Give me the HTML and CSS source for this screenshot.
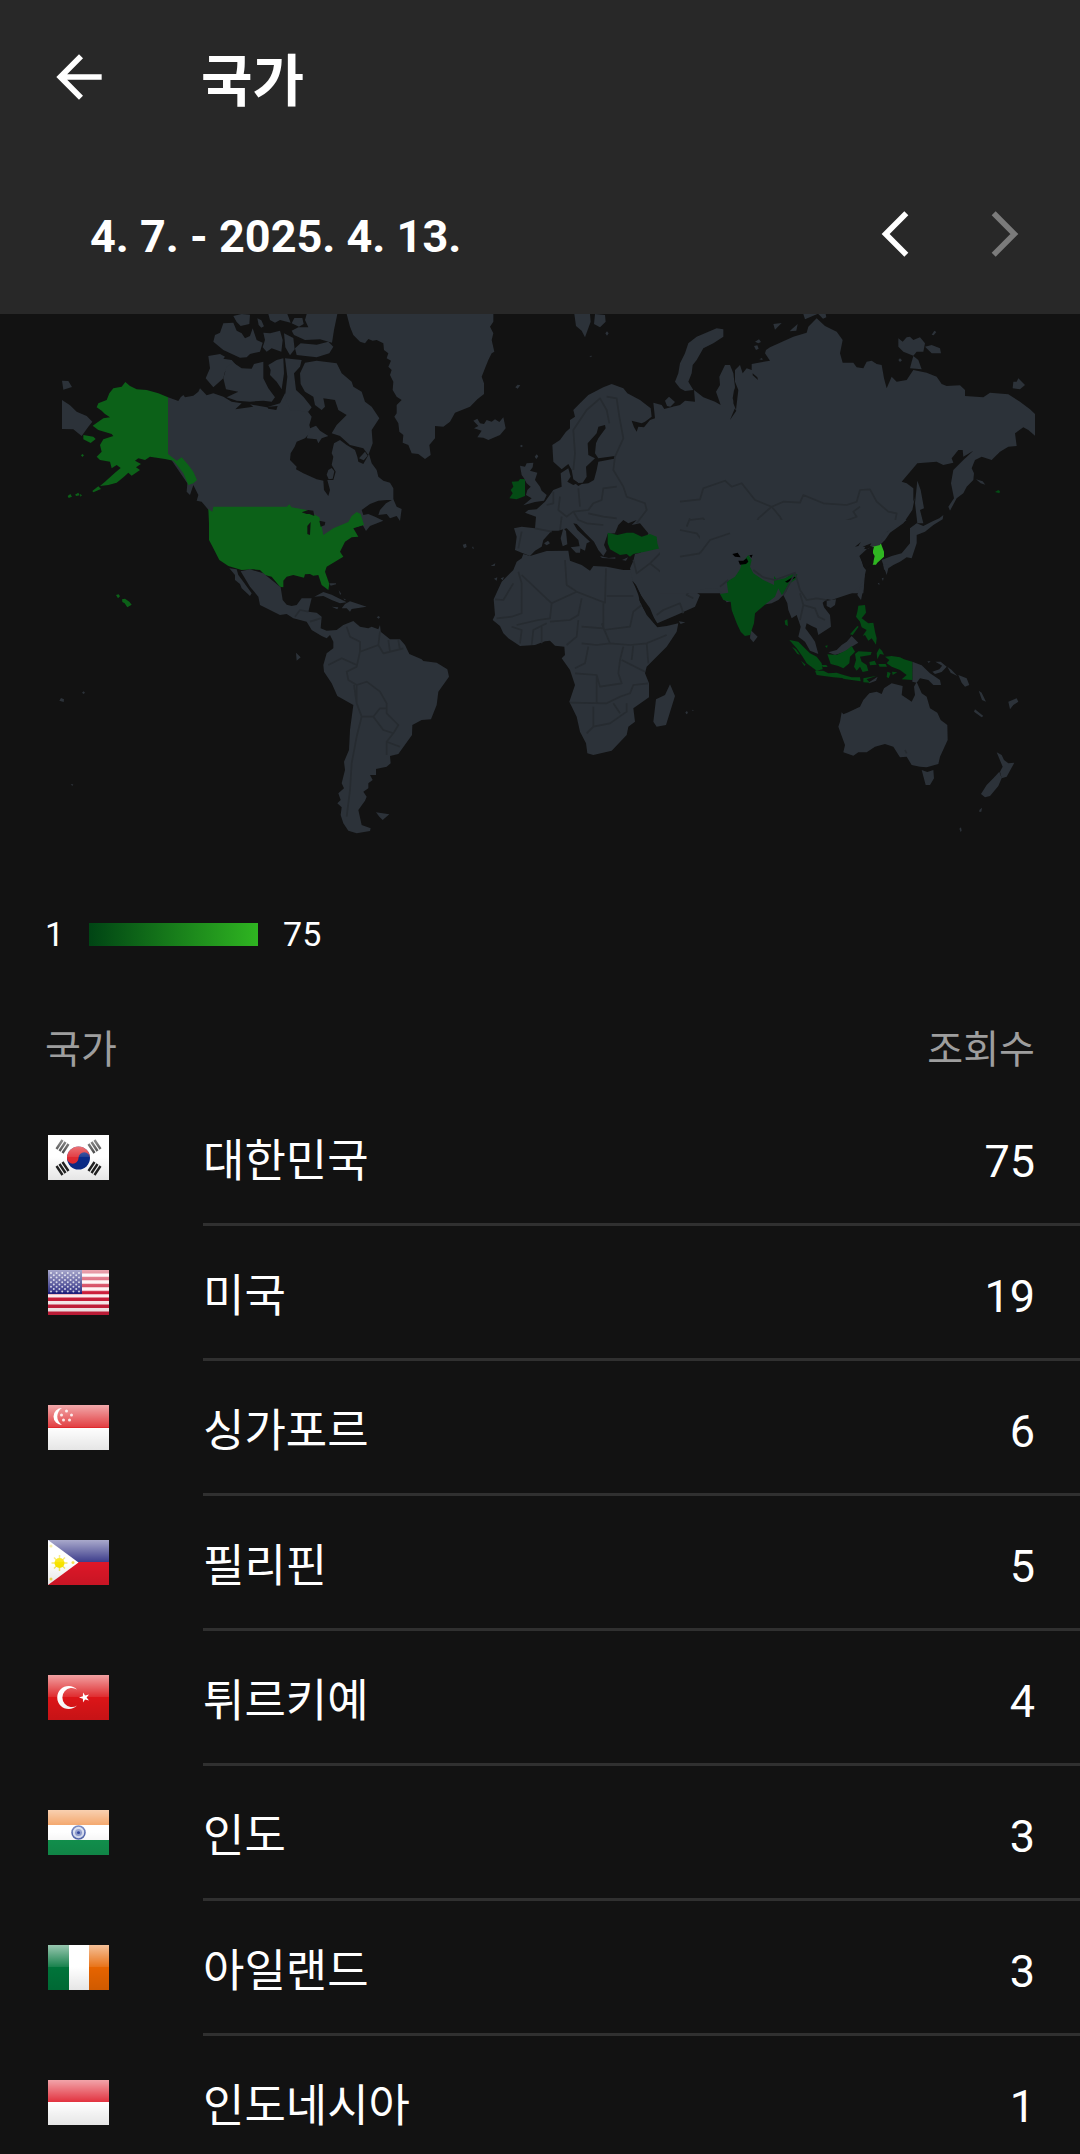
FILE: index.html
```html
<!DOCTYPE html>
<html lang="ko">
<head>
  <meta charset="UTF-8" />
  <meta name="viewport" content="width=device-width, initial-scale=1" />
  <title>국가</title>
  <link rel="stylesheet" href="styles.css">
</head>
<body>
  <div class="app">
    <header class="header">
      <div class="toolbar">
        <button class="icon-btn" type="button" aria-label="뒤로">
          <svg viewBox="0 0 24 24"><path d="M20 11H7.83l5.59-5.59L12 4l-8 8 8 8 1.41-1.41L7.83 13H20v-2z" fill="currentColor"/></svg>
        </button>
        <h1>국가</h1>
      </div>
      <div class="period">
        <p class="period-label">4. 7. - 2025. 4. 13.</p>
        <button class="icon-btn" type="button" aria-label="이전">
          <svg viewBox="0 0 24 24"><path d="M16 4.7L8.7 12l7.3 7.3" class="chevron"/></svg>
        </button>
        <button class="icon-btn" type="button" aria-label="다음" disabled>
          <svg viewBox="0 0 24 24"><path d="M8 4.7l7.3 7.3L8 19.3" class="chevron"/></svg>
        </button>
      </div>
    </header>

    <main class="content">
      <svg class="map" viewBox="0 942 3240 1620" role="img" aria-label="세계 지도">
        <!-- North America -->
        <g transform="translate(150 930)">
          <path class="land" d="M354 262L385 273 392 262 400 255 405 262 430 257 445 245 450 235 470 256 490 250 520 260 545 275 575 280 556 298 610 290 600 283 650 292 690 280 705 250 720 262 726 300 748 268 770 300 785 320 778 345 783 365 765 385 740 395 734 410 722 430 720 450 740 470 738 478 760 490 800 508 820 512 822 540 835 558 840 540 832 510 850 510 857 485 845 465 850 440 845 430 852 400 870 390 890 405 915 420 922 440 925 455 940 462 957 432 965 460 980 480 985 500 1000 512 1020 518 1030 535 1030 570 1010 570 985 572 960 582 935 600 940 615 955 612 975 620 1000 632 960 648 948 663 938 645 820 680 480 605 455 575 440 572 445 555 430 525 420 555 410 545 412 520 354 435Z"/>
          <path class="land" d="M985 615L990 600 1008 580 1030 568 1040 590 1055 597 1050 633 1040 618 1020 625 1010 612Z"/>
          <path class="land" d="M36 212L55 213 66 231 40 239ZM36 270L60 286 80 305 110 318 127 335 115 350 95 378 70 358 36 357Z"/>
          <path class="land" d="M475 138L510 132 525 140 520 146 545 150 558 165 525 185 520 205 490 232 467 205 480 175Z"/>
          <path class="land" d="M520 205L530 170 550 158 575 175 605 176 612 162 640 155 640 205 655 235 675 262 665 275 640 272 600 275 560 272 530 262 565 245 528 238Z"/>
          <path class="land" d="M655 165L680 150 700 145 702 190 695 238 680 215 660 195 662 180ZM705 145L755 150 750 170 732 190 738 240 760 260 785 292 775 305 720 300 705 260 712 200Z"/>
          <path class="land" d="M765 158L800 152 860 160 875 190 905 215 910 230 935 245 945 275 965 290 988 325 965 360 968 400 955 435 940 415 900 405 870 378 845 370 860 345 890 315 865 300 855 270 820 265 825 290 815 300 795 285 790 260 765 245 752 222 750 190Z"/>
          <path class="land" d="M780 355L798 347 810 362 835 378 815 385 805 400 800 388 770 385ZM835 480l10-6 8 10-5 22-12 2-6-14zM945 425l8 12-12 14-14-6z"/>
          <path class="land" d="M570 143L520 120 490 95 495 75 510 68 520 40 550 38 560 62 575 70 585 85 600 78 608 55 620 90 638 98 630 125 600 132 590 142Z"/>
          <path class="land" d="M550 18L575 12 600 14 598 42 572 48 560 36ZM622 25l12 6 8 18-8 4-8-8zM640 68L660 70 690 62 698 90 694 125 665 115 650 125 638 112 645 90ZM655 12L712 12 722 38 690 30 675 38 660 30ZM702 70l28 14 4 34-14 18-14-24zM735 115L752 100 800 104 835 95 850 110 838 130 800 142 740 135ZM770 12L862 12 852 60 846 98 810 88 765 90 732 75 725 62 745 52 775 52 765 30ZM725 40l8-16 24 0 4 18-14 8z"/>
          <path class="mid" d="M354 262L325 250 290 240 260 238 240 228 226 216 215 230 190 235 178 250 170 270 145 280 140 292 155 302 165 312 180 322 160 325 128 347 145 360 185 372 190 378 160 388 150 405 155 425 140 440 150 450 180 455 185 475 200 465 212 474 195 488 165 515 150 528 175 525 200 518 222 500 235 488 245 497 270 480 258 472 273 462 255 452 265 445 285 450 300 440 345 447 370 452 385 470 400 490 415 525 430 520 441 510 430 485 415 465 395 442 380 452 354 432Z"/>
          <path class="mid" d="M100 375L130 380 137 387 122 399 100 388ZM127 543l18-14 8 8-23 10zM53 558l8-6 5 8-10 4zM75 554l10-6 4 8-10 2zM90 552l6 4-5 4zM93 436l4-4 5 4-5 5zM198 855l8-2 4 6-6 6zM216 868L225 866 238 875 245 884 232 892 224 880 217 876Z"/>
          <path class="mid" d="M475 597L487 605 490 590 710 590 718 583 725 592 770 600 790 612 808 622 815 650 820 675 850 655 895 636 905 618 920 606 932 612 942 645 910 655 925 680 905 682 885 695 870 725 880 740 860 752 830 770 825 785 838 822 835 840 815 825 805 795 790 797 780 792 765 793 762 803 730 795 710 800 700 812 700 832 690 830 665 800 645 795 630 780 610 778 575 780 535 768 508 750 485 705 477 690 477 640Z"/>
          <path class="sea" d="M755 607L775 600 790 602 793 618 778 612 770 612ZM772 648L782 636 780 675 772 672ZM808 632l18 4-2 10-12 4zM645 282l10 8 28-2-4 12-24-4z"/>
        </g>

        <!-- Greenland, Europe -->
        <g transform="translate(1020 930)">
          <path class="land" d="M20 12L30 50 40 75 60 95 75 100 85 87 98 92 110 90 130 100 132 120 145 130 140 145 153 152 145 170 155 180 150 195 160 215 158 240 170 260 185 270 170 285 170 310 163 320 175 340 178 365 190 375 188 398 205 405 215 430 235 432 255 447 272 435 268 405 285 385 285 348 310 350 330 335 345 308 390 290 412 268 432 252 432 220 425 200 435 175 445 150 455 130 463 125 455 90 460 70 450 50 460 35 460 12Z"/>
          <path class="land" d="M400 332L412 326 420 340 432 342 440 330 455 335 465 328 478 336 490 322 497 355 480 375 445 390 430 383 412 382 425 362 402 355 415 348Z"/>
          <path class="land" d="M703 12L750 12 752 35 735 82 725 62 708 48ZM765 12L795 15 797 35 780 52 762 42ZM526 232l7-8 8 2-8 10zM796 70l5-6 5 6-5 7zM748 138l8-1-3 5zM540 408l4-4 5 4-5 4zM584 440l6-7 5 6-6 8zM368 704l10-3 2 10-8 4zM396 714l3-5 3 8zM452 768l14-8-2 8z"/>
          <path class="land" d="M637 405L660 390 678 365 690 355 690 330 705 320 700 300 720 280 745 255 790 232 815 222 850 235 862 250 900 270 932 295 935 320 915 335 905 340 875 332 882 352 890 365 895 350 912 352 930 330 945 325 940 278 965 285 975 300 962 318 1000 290 1015 290 1060 280 1120 290 1200 400 1200 700 1080 830 870 810 885 740 900 735 925 670 900 640 875 645 890 630 865 640 850 630 835 645 825 670 803 672 792 705 800 722 790 738 775 720 762 695 735 668 710 642 700 640 712 660 750 695 740 700 735 722 720 715 715 690 695 670 680 655 655 662 635 662 610 690 605 710 585 722 570 738 545 728 525 720 530 680 522 655 545 650 585 655 588 620 555 608 565 600 590 598 615 575 640 540 665 530 662 490 685 475 692 500 682 515 700 525 715 518 700 508 695 480 685 462 665 478 640 455Z"/>
          <path class="sea" d="M705 520L728 518 740 500 738 470 765 445 745 435 743 400 770 370 775 350 795 345 797 355 775 385 768 400 765 430 775 445 825 438 822 446 775 455 770 480 762 510 745 520 725 522 715 528Z"/>
          <path class="land" d="M975 272l12-12 18 16-14 14-10-2zM692 712l30-4-2 20-12 0zM612 700l12-8 6 8-10 6zM662 685l8-30 8 8 4 40-14 6zM780 738l26 6 20-2 0 4-40-2zM846 750l18-8-6 10z"/>
          <path class="land" d="M540 467L555 470 560 460 580 458 578 472 570 482 592 488 585 510 600 530 605 542 620 555 612 572 585 576 550 586 575 565 558 555 562 540 572 530 560 520 552 505 545 495Z"/>
          <path class="low" d="M555 508L540 507 535 514 515 515 520 530 512 540 518 550 508 565 530 568 555 558Z"/>
          <path class="low" d="M803 668L820 672 832 675 860 668 880 668 905 680 930 672 950 680 952 700 960 725 900 728 880 732 870 740 860 732 840 735 810 718 803 700Z"/>
          <path class="sea" d="M980 640L1005 623 1015 630 1000 645 1008 670 1020 690 1025 720 1000 720 995 705 1005 695 990 665Z"/>
          <path class="border" d="M700 480L705 430 700 360 740 300 780 265 800 300 808 340M800 260L830 265 838 320 850 385 825 440M825 440L820 480 850 530 860 560 915 580 920 600 890 640M660 560L655 600 680 620 700 605 745 600 760 580 785 570 790 535 830 530M715 535L720 590M700 605L715 630 740 640 790 645M745 610L790 620 830 625M660 660L665 620M545 665L535 715M585 655L635 665M975 600L1000 570 1060 565M975 600L985 635M640 545L640 580 620 585"/>
        </g>

        <!-- Africa, Middle East -->
        <g transform="translate(1350 1620)">
          <path class="land" d="M190 90L200 65 215 55 220 42 240 48 290 33 355 32 360 62 395 75 420 92 430 78 470 80 520 90 545 90 550 125 565 165 570 185 590 225 622 262 650 258 685 250 680 275 650 320 590 380 585 400 597 430 597 472 550 505 555 545 535 560 530 585 485 632 430 645 412 640 408 610 390 575 380 530 358 485 375 435 360 390 335 355 345 345 343 320 315 317 300 302 285 304 255 315 210 318 175 295 160 280 150 258 128 240 135 225 131 178 155 125Z"/>
          <path class="land" d="M550 62L555 42 650 20 700 -30 1060 -30 1060 140 830 187 800 147 760 150 720 145 750 165 735 200 680 225 622 250 600 215 580 180 560 140 548 122 540 85Z"/>
          <path class="sea" d="M660 102L680 122 700 132 708 145 685 147 680 135 660 115ZM546 122L558 135 572 165 600 205 622 258 612 248 580 205 568 180 570 165Z"/>
          <path class="land" d="M660 433L675 468 648 555 620 560 610 545 618 478 645 465ZM686 244l20 3-14 5zM132 116l10-4-2 10zM152 115l10-4-4 10zM706 517l5-4 3 6-5 4zM725 511l4-2 2 4z"/>
          <path class="border" d="M205 95L215 130 215 220 185 230 140 235M215 105L305 190 380 155 350 135 345 60M190 130L160 180 135 178M380 155L465 188 468 85M470 168L550 168M305 190L300 235 265 240 200 255M300 245L360 240 385 225 395 175M385 240L380 290 350 315M395 260L460 265 460 190M455 250L480 310 540 315 590 310 650 285M460 270L540 260 550 215 575 195M395 310L440 315 480 310M520 320L510 360 505 400 515 430 450 440 440 405 375 400M415 320L405 370 375 385M360 488L470 490 510 470 540 460 550 435 595 430M440 405L440 490M430 500L430 560 410 580M430 560L480 550 530 515 530 490M515 360L585 395M590 310L595 370M550 315L545 360M245 315L250 270 290 250M275 310L275 260M210 310L215 270 185 260M490 490L510 520M550 60L560 100 600 70 650 110M600 70L635 35M655 40L640 80 660 105M700 220L690 190 640 210 620 225M760 150L750 60 720 30M760 90L820 95 870 40M720 150L710 165 730 175"/>
        </g>

        <!-- Northern Asia, Japan -->
        <g transform="translate(2040 930)">
          <path class="land" d="M110 55L130 58 130 80 100 100 70 115 50 150 38 165 35 190 25 215 40 240 15 243 0 235 -15 215 -5 190 0 160 15 130 25 100 50 80Z"/>
          <path class="land" d="M-60 300L0 285 15 272 45 275 42 240 70 262 105 275 122 285 108 245 120 225 118 200 135 165 150 165 160 190 165 230 160 280 168 300 175 240 165 215 165 180 180 165 188 190 200 175 215 180 215 162 270 152 255 130 258 120 270 112 300 98 340 80 380 68 385 50 410 25 435 48 470 65 488 90 480 130 488 158 520 158 530 172 550 175 560 155 575 152 590 162 605 165 612 205 620 235 635 200 650 215 680 210 690 195 700 180 740 188 770 200 785 222 800 228 840 226 855 240 855 258 910 262 930 248 985 253 1020 275 1050 298 1065 312 1065 377 1045 360 1030 352 1005 370 1010 408 985 410 960 425 935 450 905 440 885 450 875 475 882 490 880 510 860 530 850 550 830 565 810 602 805 590 822 565 813 520 820 480 850 450 880 422 850 440 848 420 835 420 815 445 820 458 790 465 770 455 712 460 665 515 680 520 700 535 700 575 705 560 697 600 670 640 630 668 615 690 600 705 580 712 570 700 545 715 555 695 525 710 560 718 572 712 540 740 545 770 555 790 550 850 -60 850Z"/>
          <path class="land" d="M712 512L722 540 732 595 720 600 730 640 712 640 705 580ZM690 655L710 640 730 648 755 635 778 625 790 615 788 628 760 645 735 665 710 675 710 700 695 745 680 742 660 755 640 765 625 775 620 795 605 750 635 738 665 730 690 700Z"/>
          <path class="land" d="M655 85L668 95 680 82 690 80 700 90 720 82 735 100 730 125 710 125 700 137 670 125 655 110ZM735 110L755 105 780 115 783 130 755 130ZM700 138L715 150 725 178 690 175 695 155ZM335 58l18-16-4 20-20 2zM280 42l25-3-20 20zM370 12L412 12 375 28ZM415 12l22 0 2 10-10 4zM755 74l8-12 6 4-8 10zM655 150l5-5 6 6-6 5zM1000 215L1010 215 1015 205 1035 225 1020 238 998 235ZM888 508l20 6 8 10-14-4zM225 95l12-7 6 8-8 4zM222 108l10-2 4 10-8 4zM238 148l8-4 2 6z"/>
          <path class="sea" d="M158 265l5-30 5 20-2 35zM150 330l14-34 5 6zM218 190l14 12 2 8-16-14z"/>
          <path class="top" d="M578 708L603 701 612 725 612 740 592 758 588 764 578 764 584 738 579 730Z"/>
          <path class="low" d="M945 546l10-6 5 4-2 6z"/>
          <path class="border" d="M0 575L60 568 70 535 135 512 155 530 185 520 225 570 275 590 310 575 360 578 370 555 430 580 500 585 530 575 540 540 570 538 590 575 625 605 650 610 645 635 620 665M275 590L300 620 310 640 350 662 420 678 470 660 490 635 530 620 520 605 540 590M275 590L235 625 215 670 155 685 135 700M30 630L70 625 90 660 130 690 180 690M0 660L50 670 80 710 130 720M0 740L60 730 80 700M20 650L30 625"/>
        </g>

        <!-- South and East Asia, Oceania -->
        <g transform="translate(2100 1560)">
          <path class="land" d="M0 0L620 0 600 15 560 35 545 55 540 75 518 80 500 75 480 105 490 140 498 150 490 185 455 220 410 235 395 240 380 238 368 248 372 262 390 285 393 320 355 345 350 325 335 318 320 310 316 325 335 350 345 365 355 402 330 392 315 365 295 350 302 320 290 285 275 295 265 270 262 250 250 225 235 240 215 250 160 260 100 240 60 215 50 205 0 208Z"/>
          <path class="sea" d="M500 88L478 108 496 148 520 130 517 100 522 80ZM465 80l18-14-8 12zM488 80l26-10-6 12z"/>
          <path class="land" d="M152 330L173 350 160 367 150 355ZM380 242L408 238 405 255 392 264 380 258ZM480 202L492 198 483 240 472 225ZM550 135L565 132 560 155 552 148ZM545 175l6-2-2 10zM533 190l5-2 0 8z"/>
          <path class="land" d="M385 397L410 390 425 375 440 365 455 348 475 368 455 380 435 395 405 405ZM505 488L533 470 528 482 508 490Z"/>
          <path class="land" d="M637 425L665 436 690 460 720 480 723 495 700 495 685 480 660 475 650 488 637 485ZM697 455L718 448 728 435 740 440 725 456 705 462ZM706 425L722 425 740 440 728 438ZM742 440L755 450 772 468 752 458ZM775 465L800 475 808 495 795 500 785 488ZM836 512L845 518 858 545 846 540ZM825 568L850 588 845 592 822 575ZM925 545L950 535 955 545 940 555 930 568ZM682 424l10 0-6 5z"/>
          <path class="land" d="M425 577L430 583 445 577 480 560 490 540 508 520 530 515 545 522 552 505 575 490 608 498 605 525 635 545 645 525 642 500 650 486 665 520 680 530 690 565 712 578 722 600 742 615 743 660 720 710 715 732 680 742 660 740 635 735 620 710 600 712 580 680 555 672 525 680 500 697 475 697 460 707 430 697 435 675 415 620 420 605ZM665 750L682 756 700 750 702 775 690 795 677 795ZM890 697L905 705 912 720 925 730 943 728 920 770 905 775 900 755 908 740ZM898 755L905 775 895 798 870 828 855 832 843 822 860 795 880 775ZM838 870l8-7-2 12-6 1zM778 926l5-4 2 10-3 4z"/>
          <path class="low" d="M145 105L155 120 150 140 160 160 190 180 222 195 222 168 232 180 255 175 275 162 292 162 288 178 270 190 258 215 245 225 235 205 225 230 200 250 165 280 162 310 150 345 135 348 122 335 110 310 95 270 92 245 70 240 60 222 85 218 80 185 105 170 120 148 125 130ZM254 302l8-4 2 20-8-4z"/>
          <path class="gap" d="M97 102L113 98 122 112 105 110ZM115 122L130 122 140 115 145 125 138 132 120 134ZM148 106l10-2-4 10zM255 185L280 170 288 172 262 188Z"/>
          <path class="low" d="M475 257L495 255 498 278 485 295 505 310 520 308 525 335 530 355 528 374 515 355 505 362 495 345 488 348 500 330 485 322 480 305 468 290 472 275ZM450 343L472 318 476 320 458 345Z"/>
          <path class="low" d="M268 360L295 365 310 380 330 400 350 410 365 430 368 448 350 452 320 430 308 410 290 385ZM345 452L370 452 385 460 410 458 430 465 435 475 400 472 350 465ZM428 464L455 472 480 472 482 484 428 476ZM490 475L530 467 500 478 510 488 490 487ZM276 380l12 8 12 16-8-2zM303 422l14 12-4 4zM365 435l14 0 4 6-14 0z"/>
          <path class="low" d="M382 403L410 405 440 390 455 378 465 395 450 410 448 430 430 445 415 438 392 432ZM375 378l8-2-2 8zM465 402L475 394 515 396 512 405 480 410 485 425 500 435 505 452 488 456 480 440 470 452 462 440 468 420ZM538 385L546 392 552 404 540 402 532 418 530 400ZM508 426l16-4 6 12-20 2zM535 432l22 0 4 8-22 0zM562 455l10 4-6 16-6-4zM555 410L575 408 600 412 612 418 637 425 637 480 605 478 620 465 600 450 575 440 560 430 568 420ZM576 455l16 2-14 8z"/>
          <path class="border" d="M160 150L190 172 225 180 285 158 300 210 320 240 350 235 380 240M250 225L285 160M300 220L310 255 345 265 355 290 375 300M310 255L300 300M0 100L30 60 90 40M85 180L60 200M620 700L615 690"/>
        </g>

        <!-- Central and South America -->
        <g transform="translate(150 1710)">
          <path class="land" d="M572 4L600 -2 640 10 665 30 692 52 698 90 710 104 725 108 740 105 755 85 785 85 775 125 800 128 815 140 812 175 830 182 860 180 880 165 910 153 930 170 955 175 965 170 985 178 990 165 992 185 1020 208 1050 208 1065 225 1078 252 1115 268 1120 273 1160 278 1192 298 1197 320 1165 365 1160 405 1143 448 1115 450 1087 465 1086 495 1045 552 1020 558 1022 580 1010 590 978 597 978 615 960 615 968 630 955 640 955 655 940 665 950 680 945 692 925 720 935 765 962 775 960 783 920 790 895 782 880 760 872 735 875 712 862 700 872 690 865 670 882 655 875 640 885 600 882 575 897 540 900 480 910 405 862 378 845 340 822 305 820 285 830 250 850 235 850 215 840 195 830 205 815 198 785 180 770 155 730 145 710 132 690 135 630 105 625 80 600 50Z"/>
          <path class="land" d="M538 -5L560 -2 565 15 580 35 605 70 600 78 575 55 570 42 555 30 555 15ZM793 80L820 66 845 74 890 97 870 100 845 90 820 78ZM885 102L900 94 950 110 905 117 900 125 890 115 875 115ZM845 110L865 112 862 118ZM838 40l20 0 0 3-16 4zM866 60l8 12-4 2zM880 85l8 4-4 2zM980 142l6-4 4 4-4 4z"/>
          <path class="land" d="M978 727L1018 733 998 750 988 740ZM738 248L752 262 740 272ZM28 392l5-8 9 4-1 8zM96 368l5-4 4 4-4 4zM62 643l8 0-3 5z"/>
          <path class="border" d="M890 170L900 200 930 215 930 245 985 225 990 185M930 245L920 290 890 305 895 330 920 345 950 335 990 365 1010 400 1010 430 1045 465 1030 490 1000 480 970 440 935 440 920 400 920 345M935 440L920 500 905 580 900 660 890 740M835 285L875 265 920 285M985 225L1000 250 1060 235M1015 210L1020 245M1045 210L1050 240M1030 490L1010 515 1050 530M1010 515L1010 555M970 440L990 415 1010 415M735 140L750 120 775 125M780 155L812 145M920 400L912 345"/>
        </g>
      </svg>

      <div class="legend">
        <span>1</span>
        <span class="legend-bar"></span>
        <span>75</span>
      </div>

      <table class="countries">
        <thead>
          <tr>
            <th colspan="2" scope="col">국가</th>
            <th class="views" scope="col">조회수</th>
          </tr>
        </thead>
        <tbody>
          <tr>
            <td class="flag-cell">
              <svg class="flag" viewBox="0 0 61 45">
                <rect width="61" height="45" fill="#fff"/>
                <circle cx="30.5" cy="23" r="11.5" fill="#0a2a88"/>
                <path d="M19 23a11.5 11.5 0 0 1 23 0a5.75 5.75 0 0 0-11.5 0a5.75 5.75 0 0 1-11.5 0z" fill="#e02a30"/>
                <path d="M8.500 14l6-9M11.500 16l6-9M14.500 18l6-9M52.500 14l-6-9M49.500 16l-6-9M46.500 18l-6-9M8.500 31l6 9M11.500 29l6 9M14.500 27l6 9M52.500 31l-6 9M49.500 29l-6 9M46.500 27l-6 9" stroke="#222" stroke-width="2.4"/>
                <use href="#gloss"/>
              </svg>
            </td>
            <td class="name">대한민국</td>
            <td class="views">75</td>
          </tr>
          <tr>
            <td class="flag-cell">
              <svg class="flag" viewBox="0 0 61 45">
                <rect width="61" height="45" fill="#fff0f2"/>
                <path d="M0 1.700h61M0 8.600h61M0 15.500h61M0 22.400h61M0 29.300h61M0 36.200h61M0 43.200h61" stroke="#cc1f3c" stroke-width="3.5"/>
                <rect width="34" height="24" fill="#20207c"/>
                <path d="M3 3h30M3 7.600h30M3 12.200h30M3 16.800h30M3 21.400h30M5.800 5.300h26M5.800 9.900h26M5.800 14.500h26M5.800 19.100h26" stroke="#fff" stroke-width="2" stroke-linecap="round" stroke-dasharray="0 5.6" opacity=".75"/>
                <use href="#gloss"/>
              </svg>
            </td>
            <td class="name">미국</td>
            <td class="views">19</td>
          </tr>
          <tr>
            <td class="flag-cell">
              <svg class="flag" viewBox="0 0 61 45">
                <rect width="61" height="45" fill="#fff"/>
                <rect width="61" height="23" fill="#df2a2e"/>
                <path d="M14 3a8.500 8.500 0 1 0 0 17a10 10 0 0 1 0-17z" fill="#fff"/>
                <g fill="#fff" opacity=".85">
                  <circle cx="18.5" cy="6" r="1.5"/>
                  <circle cx="13.5" cy="10" r="1.5"/>
                  <circle cx="23.5" cy="10" r="1.5"/>
                  <circle cx="15.5" cy="15" r="1.5"/>
                  <circle cx="21.5" cy="15" r="1.5"/>
                </g>
                <use href="#gloss"/>
              </svg>
            </td>
            <td class="name">싱가포르</td>
            <td class="views">6</td>
          </tr>
          <tr>
            <td class="flag-cell">
              <svg class="flag" viewBox="0 0 61 45">
                <rect width="61" height="23" fill="#28287f"/>
                <rect y="22" width="61" height="23" fill="#de1728"/>
                <path d="M0 0l30.500 22.500L0 45z" fill="#fff"/>
                <path d="M11.500 15v16M3.500 23h16M6 17.500l11 11M17 17.500l-11 11" stroke="#f6e96a" stroke-width="1.5"/>
                <circle cx="11.5" cy="23" r="5" fill="#f9e400"/>
                <g fill="#f6e25a">
                  <circle cx="3" cy="6" r="1.5"/>
                  <circle cx="3" cy="39" r="1.5"/>
                  <circle cx="25" cy="22.5" r="1.5"/>
                </g>
                <use href="#gloss"/>
              </svg>
            </td>
            <td class="name">필리핀</td>
            <td class="views">5</td>
          </tr>
          <tr>
            <td class="flag-cell">
              <svg class="flag" viewBox="0 0 61 45">
                <rect width="61" height="45" fill="#dc1518"/>
                <path d="M29 14.500a11.500 11.500 0 1 0 0 16a9.500 9.500 0 1 1 0-16z" fill="#fff"/>
                <path d="M31 22.500L34.900 21.200 35 17.500 37.100 20.500 41 19.400 38.600 22.500 41 25.600 37.100 24.500 35 27.500 34.900 23.800Z" fill="#fff"/>
                <use href="#gloss"/>
              </svg>
            </td>
            <td class="name">튀르키예</td>
            <td class="views">4</td>
          </tr>
          <tr>
            <td class="flag-cell">
              <svg class="flag" viewBox="0 0 61 45">
                <rect width="61" height="45" fill="#fff"/>
                <rect width="61" height="15" fill="#f08a3c"/>
                <rect y="30" width="61" height="15" fill="#12934e"/>
                <circle cx="30.5" cy="22.5" r="6.5" fill="#d4dbee" stroke="#5468ae" stroke-width="1.5"/>
                <circle cx="30.5" cy="22.5" r="3.5" fill="#8c9acb"/>
                <circle cx="30.5" cy="22.5" r="1.5" fill="#33479b"/>
                <use href="#gloss"/>
              </svg>
            </td>
            <td class="name">인도</td>
            <td class="views">3</td>
          </tr>
          <tr>
            <td class="flag-cell">
              <svg class="flag" viewBox="0 0 61 45">
                <rect width="61" height="45" fill="#fff"/>
                <rect width="21" height="45" fill="#00743a"/>
                <rect x="41" width="20" height="45" fill="#e66400"/>
                <use href="#gloss"/>
              </svg>
            </td>
            <td class="name">아일랜드</td>
            <td class="views">3</td>
          </tr>
          <tr>
            <td class="flag-cell">
              <svg class="flag" viewBox="0 0 61 45">
                <rect width="61" height="45" fill="#fff"/>
                <rect width="61" height="22" fill="#df1c2a"/>
                <use href="#gloss"/>
              </svg>
            </td>
            <td class="name">인도네시아</td>
            <td class="views">1</td>
          </tr>
        </tbody>
      </table>
    </main>
  </div>

  <!-- Shared highlight for the flags -->
  <svg class="defs" aria-hidden="true">
    <defs>
      <linearGradient id="shine" x1="0" y1="0" x2="0" y2="1">
        <stop offset="0" stop-color="#fff" stop-opacity=".6"/>
        <stop offset="1" stop-color="#fff" stop-opacity=".1"/>
      </linearGradient>
      <linearGradient id="shade" x1="0" y1="0" x2="0" y2="1">
        <stop offset="0" stop-color="#000" stop-opacity="0"/>
        <stop offset="1" stop-color="#000" stop-opacity=".1"/>
      </linearGradient>
      <g id="gloss">
        <rect width="61" height="22" fill="url(#shine)"/>
        <rect y="22" width="61" height="23" fill="url(#shade)"/>
      </g>
    </defs>
  </svg>
</body>
</html>
```

FILE: styles.css
```css
* {
  box-sizing: border-box;
}

body {
  margin: 0;
  background-color: #121212;
  color: #fff;
  font-family: Roboto, 'Noto Sans CJK KR', sans-serif;
  font-size: 45px;
}

.app {
  display: flex;
  flex-direction: column;
  height: 100vh;
}

/* Header */
.header {
  background-color: #282828;
}

.toolbar {
  display: flex;
  align-items: center;
  gap: 88px;
  height: 154px;
  padding: 0 45px;
}

h1 {
  margin: 0;
  padding-top: 9px;
  font-size: 56px;
  font-weight: 700;
  line-height: 80px;
}

.period {
  display: flex;
  align-items: center;
  gap: 42px;
  height: 160px;
  padding: 0 41px 0 90px;
}

.period-label {
  flex: 1;
  margin: 0;
  padding-top: 4px;
  font-weight: 700;
}

.icon-btn {
  width: 68px;
  height: 68px;
  padding: 0;
  border: none;
  background: none;
  color: #fff;
  cursor: pointer;
}

.icon-btn:disabled {
  color: #7b7b7b;
  cursor: default;
}

.icon-btn svg {
  display: block;
  width: 100%;
}

.chevron {
  fill: none;
  stroke: currentColor;
  stroke-width: 2;
}

/* Map */
.content {
  flex: 1;
  min-height: 0;
  overflow-y: auto;
  scrollbar-width: none;
}

.map {
  display: block;
  width: 100%;
}

.land {
  fill: #2c3239;
}

.border {
  fill: none;
  stroke: #262b30;
  stroke-width: 5;
  stroke-linejoin: round;
}

.sea {
  fill: #121212;
}

.gap {
  fill: #000;
}

.low {
  fill: #044b15;
}

.mid {
  fill: #0c6118;
}

.top {
  fill: #2fb521;
}

.legend {
  display: flex;
  align-items: center;
  gap: 25px;
  padding: 60px 45px 48px;
  font-size: 34px;
  line-height: 40px;
}

.legend-bar {
  width: 169px;
  height: 23px;
  background: linear-gradient(to right, #004414, #2fb521);
}

/* Country list */
.countries {
  width: 100%;
  border-collapse: separate;
  border-spacing: 0;
}

th {
  height: 89px;
  padding: 6px 45px 0;
  color: #9e9e9e;
  font-size: 39px;
  font-weight: 400;
  line-height: 56px;
  text-align: left;
}

td {
  height: 135px;
  padding: 0;
  line-height: 60px;
}

.name,
td.views {
  padding-top: 9px;
  border-bottom: 3px solid #303030;
}

.flag-cell {
  width: 203px;
  padding-left: 48px;
  border-bottom: 3px solid transparent;
}

.views {
  padding-right: 45px;
  text-align: right;
}

.flag {
  display: block;
  width: 61px;
  height: 45px;
}

.defs {
  position: absolute;
  width: 0;
  height: 0;
}
```
